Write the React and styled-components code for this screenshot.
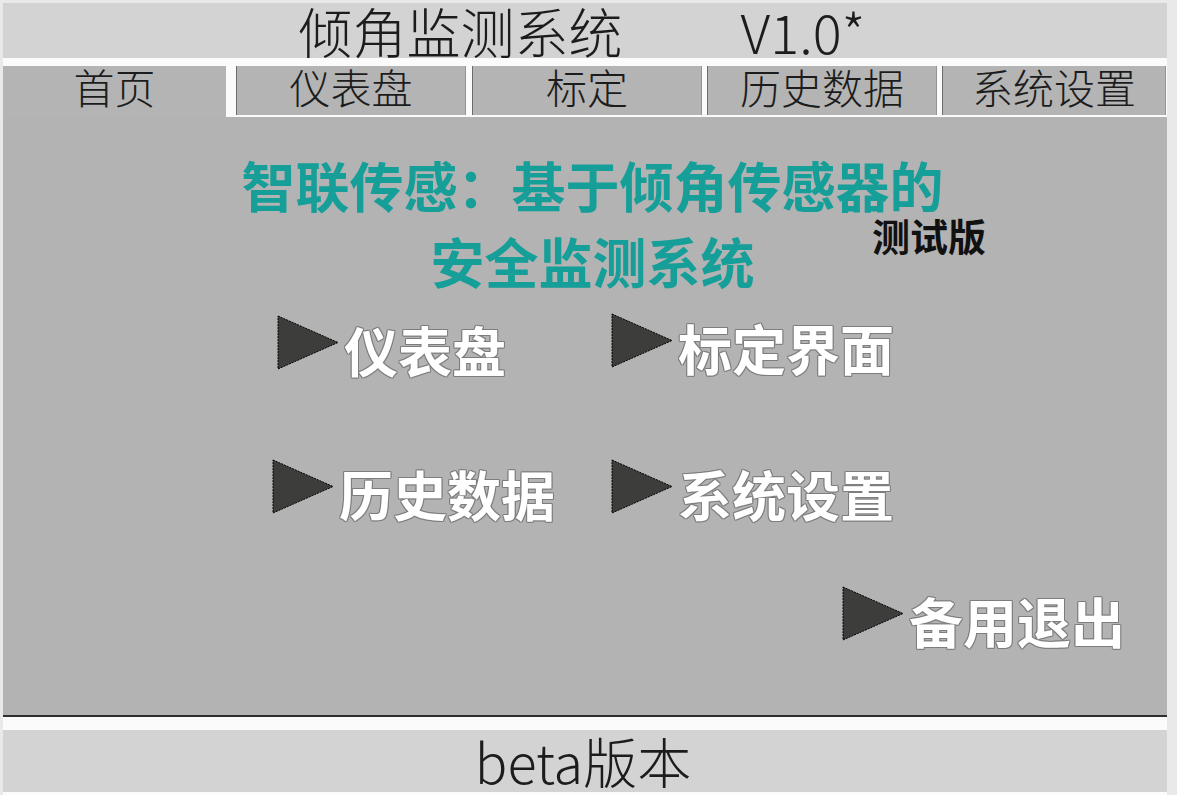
import styled, { createGlobalStyle } from 'styled-components';

const GlobalStyle = createGlobalStyle`
  html, body {
    margin: 0;
    padding: 0;
    background: #e9e9e9;
  }
  body {
    font-family: "Noto Sans CJK SC", "Noto Sans", sans-serif;
  }
`;

const Window = styled.div`
  width: 1164px;
  height: 792px;
  margin: 3px 0 0 3px;
  background: #fbfbfb;
  display: flex;
  flex-direction: column;
`;

const TitleBar = styled.div`
  height: 55px;
  background: #d3d3d3;
  display: flex;
  justify-content: center;
  align-items: center;
  padding-right: 6px;
  color: #1c1c1c;
  font-size: 54px;
  font-weight: 300;
  line-height: 55px;
  white-space: nowrap;
`;

const Version = styled.span`
  margin-left: 118px;
`;

const TabBar = styled.div`
  margin-top: 8px;
  display: flex;
  align-items: flex-start;
  height: 51px;
`;

const Tab = styled.div`
  box-sizing: border-box;
  width: ${(p) => p.$w}px;
  margin-left: ${(p) => p.$gap || 0}px;
  height: ${(p) => (p.$active ? 51 : 49)}px;
  background: #b4b4b4;
  border-left: ${(p) => (p.$active ? 'none' : '1px solid #6c6c6c')};
  border-right: ${(p) => (p.$active ? 'none' : '1px solid #949494')};
  display: flex;
  justify-content: center;
  color: #1c1c1c;
  font-size: 41px;
  font-weight: 300;
  line-height: 40px;
`;

const Content = styled.div`
  height: 598px;
  background: #b3b3b3;
  display: flex;
  flex-direction: column;
  border-bottom: 2px solid #2e2e2e;
`;

const Heading = styled.div`
  position: relative;
  margin-top: 30px;
  padding-left: 15px;
  text-align: center;
  color: #169e99;
  font-size: 54px;
  font-weight: 700;
  line-height: 76px;
`;

const Edition = styled.span`
  position: absolute;
  left: 869px;
  top: 68px;
  color: #111;
  font-size: 38px;
  font-weight: 700;
  line-height: 40px;
`;

const Menu = styled.div`
  margin-top: 14px;
  padding-left: 269px;
  display: grid;
  grid-template-columns: 339px 231px 1fr;
  grid-template-rows: 146px 127px auto;
`;

const MenuItem = styled.div`
  grid-column: ${(p) => p.$col};
  grid-row: ${(p) => p.$row};
  width: max-content;
  display: flex;
  align-items: flex-start;
  margin-left: ${(p) => p.$shift || 0}px;
  margin-top: ${(p) => p.$drop || 0}px;
  cursor: pointer;

  svg {
    flex-shrink: 0;
  }
`;

const Label = styled.span`
  margin-left: 5px;
  margin-top: 7px;
  color: #ffffff;
  font-size: 54px;
  font-weight: 700;
  line-height: 56px;
  white-space: nowrap;
  text-shadow:
    1px 0 0 #7d7d7d,
    -1px 0 0 #7d7d7d,
    0 1px 0 #7d7d7d,
    0 -1px 0 #7d7d7d,
    1px 1px 0 #8a8a8a,
    -1px -1px 0 #8a8a8a,
    1px -1px 0 #8a8a8a,
    -1px 1px 0 #8a8a8a;
`;

const Gap = styled.div`
  height: 13px;
  background: #fbfbfb;
`;

const Footer = styled.div`
  height: 62px;
  background: #d3d3d3;
  display: flex;
  justify-content: center;
  align-items: center;
  padding-right: 4px;
  color: #1c1c1c;
  font-size: 54px;
  font-weight: 300;
  line-height: 58px;
`;

function Arrow() {
  return (
    <svg width="62" height="55" viewBox="0 0 62 55">
      <polygon
        points="1,1 61,27.5 1,54"
        fill="#3d3e3b"
        stroke="#000"
        strokeWidth="1"
        strokeDasharray="2 1"
      />
    </svg>
  );
}

const tabs = [
  { name: '首页', w: 223, active: true },
  { name: '仪表盘', w: 230, gap: 10 },
  { name: '标定', w: 230, gap: 6 },
  { name: '历史数据', w: 230, gap: 5 },
  { name: '系统设置', w: 224, gap: 5 }
];

const menu = [
  { name: '仪表盘', col: 1, row: 1, shift: 5, drop: 2 },
  { name: '标定界面', col: 2, row: 1 },
  { name: '历史数据', col: 1, row: 2 },
  { name: '系统设置', col: 2, row: 2 },
  { name: '备用退出', col: 3, row: 3 }
];

export default function App() {
  return (
    <>
      <GlobalStyle />
      <Window>
        <TitleBar>
          倾角监测系统
          <Version>V1.0*</Version>
        </TitleBar>
        <TabBar>
          {tabs.map((t) => (
            <Tab key={t.name} $w={t.w} $gap={t.gap} $active={t.active}>
              {t.name}
            </Tab>
          ))}
        </TabBar>
        <Content>
          <Heading>
            智联传感：基于倾角传感器的
            <br />
            安全监测系统
            <Edition>测试版</Edition>
          </Heading>
          <Menu>
            {menu.map((m) => (
              <MenuItem
                key={m.name}
                $col={m.col}
                $row={m.row}
                $shift={m.shift}
                $drop={m.drop}
              >
                <Arrow />
                <Label>{m.name}</Label>
              </MenuItem>
            ))}
          </Menu>
        </Content>
        <Gap />
        <Footer>beta版本</Footer>
      </Window>
    </>
  );
}
